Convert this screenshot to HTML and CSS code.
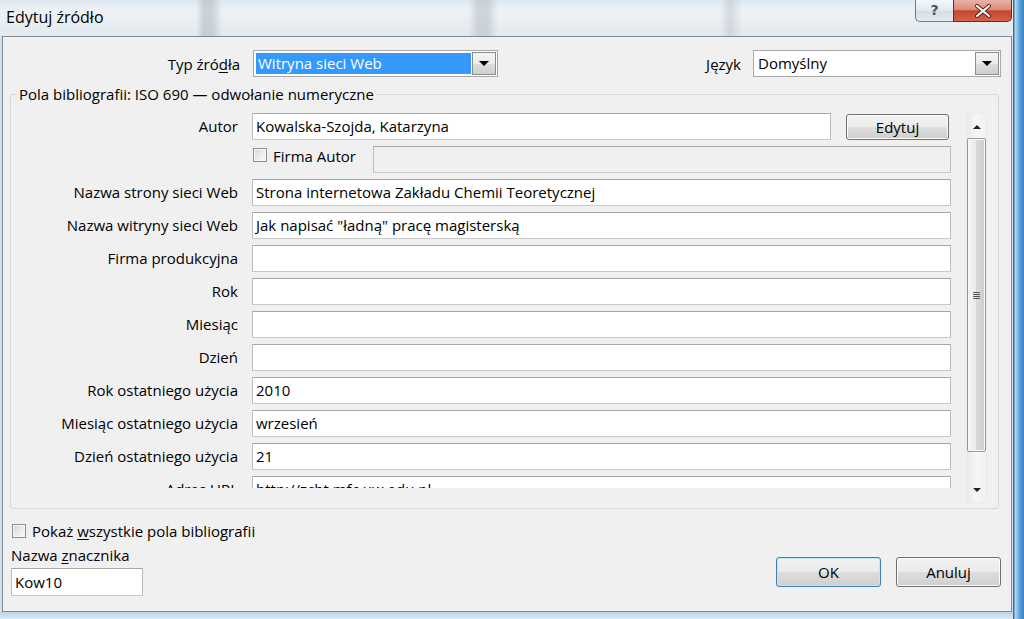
FILE: index.html
```html
<!DOCTYPE html>
<html lang="pl">
<head>
<meta charset="utf-8">
<title>Edytuj źródło</title>
<link rel="stylesheet" href="styles.css">
</head>
<body>
<div class="screen">
  <div class="main-col">
    <div class="titlebar">
      <span class="title">Edytuj źródło</span>
      <div class="caption">
        <span class="cap-help">?</span>
        <span class="cap-close">
          <svg width="18" height="14" viewBox="0 0 18 14"><path d="M3 2 L15 12 M15 2 L3 12" stroke="#5a1a10" stroke-width="4" stroke-linecap="round"/><path d="M3 2 L15 12 M15 2 L3 12" stroke="#ffffff" stroke-width="2.2" stroke-linecap="round"/></svg>
        </span>
      </div>
    </div>
    <div class="dialog">
      <div class="toprow">
        <span class="top-lbl1">Typ źró<u>d</u>ła</span>
        <div class="combo combo1">
          <span class="val sel">Witryna sieci Web</span>
          <span class="drop"><span class="tri"></span></span>
        </div>
        <span class="spacer"></span>
        <span class="top-lbl2"><u>J</u>ęzyk</span>
        <div class="combo combo2">
          <span class="val">Domyślny</span>
          <span class="drop"><span class="tri"></span></span>
        </div>
      </div>
      <fieldset class="group">
        <legend>Pola bibliografii: ISO 690 — odwołanie numeryczne</legend>
        <div class="scrollwrap">
          <div class="viewport">
            <div class="rows">
              <span class="lbl">Autor</span>
              <div class="cell-flex">
                <span class="field field-autor">Kowalska-Szojda, Katarzyna</span>
                <button class="btn btn-edit">Edytuj</button>
              </div>
              <span class="lbl"></span>
              <div class="cell-flex cell-firma">
                <span class="chk chk-firma"></span>
                <span class="chk-text">Firma Autor</span>
                <span class="field field-disabled"></span>
              </div>
              <span class="lbl">Nazwa strony sieci Web</span>
              <span class="field">Strona internetowa Zakładu Chemii Teoretycznej</span>
              <span class="lbl">Nazwa witryny sieci Web</span>
              <span class="field">Jak napisać "ładną" pracę magisterską</span>
              <span class="lbl">Firma produkcyjna</span>
              <span class="field"></span>
              <span class="lbl">Rok</span>
              <span class="field"></span>
              <span class="lbl">Miesiąc</span>
              <span class="field"></span>
              <span class="lbl">Dzień</span>
              <span class="field"></span>
              <span class="lbl">Rok ostatniego użycia</span>
              <span class="field">2010</span>
              <span class="lbl">Miesiąc ostatniego użycia</span>
              <span class="field">wrzesień</span>
              <span class="lbl">Dzień ostatniego użycia</span>
              <span class="field">21</span>
              <span class="lbl">Adres URL</span>
              <span class="field">http://zcht.mfc.uw.edu.pl</span>
            </div>
          </div>
          <div class="scrollbar">
            <span class="sb-btn"><span class="tri-up"></span></span>
            <span class="sb-thumb"><span class="grip"></span></span>
            <span class="sb-fill"></span>
            <span class="sb-btn"><span class="tri-down"></span></span>
          </div>
        </div>
      </fieldset>
      <div class="bottom">
        <div class="bottom-left">
          <div class="chk-row">
            <span class="chk"></span>
            <span class="chk-text">Pokaż <u>w</u>szystkie pola bibliografii</span>
          </div>
          <div class="tag-lbl">Nazwa <u>z</u>nacznika</div>
          <span class="field field-tag">Kow10</span>
        </div>
        <div class="bottom-right">
          <button class="btn btn-main btn-ok">OK</button>
          <button class="btn btn-main">Anuluj</button>
        </div>
      </div>
    </div>
    <div class="bottom-strip"></div>
  </div>
  <div class="frame"></div>
</div>
</body>
</html>
```

FILE: styles.css
```css
* { box-sizing: border-box; }
html, body { margin: 0; padding: 0; }
body {
  font-family: "Open Sans", "Noto Sans", sans-serif;
  font-size: 15px;
  color: #000;
  background: #cfe0f0;
}
u { text-decoration: underline; text-underline-offset: 2px; }

.screen {
  width: 1024px;
  height: 619px;
  display: flex;
  overflow: hidden;
}
.main-col {
  width: 1013px;
  display: flex;
  flex-direction: column;
}
.frame {
  width: 11px;
  background: linear-gradient(90deg, #3a6f9e 0, #3a6f9e 1px, #b9dcf5 2px, #8cc2ea 4px, #4f95d2 8px, #3b84c6 11px);
}

/* title bar */
.titlebar {
  height: 36px;
  display: flex;
  justify-content: space-between;
  align-items: flex-start;
  padding-left: 6px;
  background:
    linear-gradient(90deg, transparent 196px, rgba(140,150,160,.35) 204px, rgba(140,150,160,.35) 212px, transparent 222px),
    linear-gradient(90deg, transparent 468px, rgba(140,150,160,.3) 478px, rgba(140,150,160,.3) 488px, transparent 498px),
    linear-gradient(90deg, transparent 720px, rgba(140,150,160,.25) 730px, transparent 742px),
    linear-gradient(180deg, #dfe8f0 0, #eef2f5 30%, #e3e9ee 100%);
}
.title {
  font-size: 16px;
  line-height: 34px;
}
.caption {
  display: flex;
  margin-right: 1px;
}
.cap-help {
  width: 38px;
  height: 22px;
  border: 1px solid #6b7c92;
  border-top: none;
  border-right: none;
  border-radius: 0 0 0 5px;
  background: linear-gradient(180deg, #f5f8fb 0, #e2e9f0 50%, #d3dde8 51%, #e4ebf2 100%);
  color: #44556a;
  font-family: "DejaVu Sans", sans-serif;
  font-size: 14px;
  font-weight: bold;
  text-align: center;
  line-height: 20px;
}
.cap-close {
  width: 59px;
  height: 22px;
  border: 1px solid #6e2a1e;
  border-top: none;
  border-radius: 0 0 5px 0;
  background: linear-gradient(180deg, #eab3a5 0, #dc8c78 45%, #c7452e 52%, #d2624a 100%);
  display: flex;
  align-items: center;
  justify-content: center;
}

/* dialog */
.dialog {
  margin-left: 2px;
  width: 1010px;
  height: 576px;
  border: 1px solid #858a92;
  background: #f0f0f0;
  display: flex;
  flex-direction: column;
}
.toprow {
  display: flex;
  align-items: center;
  margin-top: 13px;
  height: 27px;
}
.top-lbl1 {
  width: 237px;
  margin-right: 13px;
  text-align: right;
}
.spacer { flex: 1; }
.top-lbl2 { margin-right: 12px; }
.combo {
  height: 27px;
  border: 1px solid #a5a9ae;
  background: #fff;
  display: flex;
  align-items: center;
  padding: 1px;
}
.combo1 { width: 245px; }
.combo2 { width: 248px; margin-right: 10px; }
.combo .val {
  flex: 1;
  height: 21px;
  line-height: 21px;
  margin: 0 1px 0 1px;
  padding-left: 2px;
  white-space: nowrap;
}
.combo .val.sel {
  background: #3399ff;
  color: #fff;
}
.drop {
  width: 24px;
  height: 23px;
  border: 1px solid #8c8c8c;
  background: linear-gradient(180deg, #f4f4f4 0, #ebebeb 50%, #dddddd 51%, #cfcfcf 100%);
  display: flex;
  align-items: center;
  justify-content: center;
}
.tri {
  width: 0;
  height: 0;
  border-left: 5px solid transparent;
  border-right: 5px solid transparent;
  border-top: 5px solid #000;
}

/* group box */
.group {
  margin: 9px 0 0 7px;
  width: 989px;
  border: 1px solid #d3d9de;
  border-radius: 3px;
  padding: 10px 0 5px 0;
  min-width: 0;
}
.group legend {
  margin-left: 6px;
  padding: 0 2px;
  line-height: 17px;
}
.scrollwrap {
  display: flex;
  align-items: flex-start;
}
.viewport {
  height: 375px;
  overflow: hidden;
  width: 940px;
}
.rows {
  display: grid;
  grid-template-columns: 227px 699px;
  grid-auto-rows: 27px;
  column-gap: 14px;
  row-gap: 6px;
}
.lbl {
  text-align: right;
  line-height: 27px;
  white-space: nowrap;
}
.field {
  display: block;
  height: 27px;
  border: 1px solid #ababab;
  border-color: #a6a6a6 #bdbdbd #c8c8c8 #bdbdbd;
  background: #fff;
  padding-left: 3px;
  line-height: 25px;
  white-space: nowrap;
  overflow: hidden;
}
.cell-flex {
  display: flex;
  align-items: center;
}
.cell-firma { align-items: flex-start; }
.cell-firma .chk { margin-top: 2px; }
.cell-firma .chk-text { line-height: 20px; }
.field-autor { width: 579px; margin-right: 15px; }
.field-disabled {
  width: 578px;
  margin-left: auto;
  background: #f0f0f0;
}
.chk {
  display: inline-block;
  width: 14px;
  height: 14px;
  border: 1px solid #8e8f8f;
  background: linear-gradient(135deg, #d6d6d6 0, #eeeeee 60%, #fbfbfb 100%);
  box-shadow: inset 0 0 0 1px #f6f6f6;
  flex: none;
}
.chk-firma { margin-left: 1px; }
.chk-text { margin-left: 6px; white-space: nowrap; }

.btn {
  font: inherit;
  color: #000;
  border: 1px solid #707070;
  border-radius: 3px;
  background: linear-gradient(180deg, #f2f2f2 0, #ebebeb 50%, #dddddd 51%, #cfcfcf 100%);
  box-shadow: inset 0 0 0 1px #fbfbfb;
  padding: 0;
}
.btn-edit { width: 103px; height: 26px; }

/* scrollbar */
.scrollbar {
  margin-left: 15px;
  width: 21px;
  height: 390px;
  border: 1px solid #ebebeb;
  background: linear-gradient(90deg, #eaeaea 0, #f6f6f6 50%, #f2f2f2 100%);
  display: flex;
  flex-direction: column;
  align-items: center;
}
.sb-btn {
  height: 23px;
  width: 100%;
  display: flex;
  align-items: center;
  justify-content: center;
}
.tri-up, .tri-down {
  width: 0;
  height: 0;
  border-left: 4px solid transparent;
  border-right: 4px solid transparent;
}
.tri-up { border-bottom: 4px solid #222; margin-top: 2px; }
.tri-down { border-top: 4px solid #222; margin-bottom: 2px; }
.sb-thumb {
  margin-top: 1px;
  width: 19px;
  height: 314px;
  border: 1px solid #979797;
  border-radius: 2px;
  background: linear-gradient(90deg, #f5f5f5 0, #eaeaea 45%, #d9d9d9 50%, #cdcdcd 100%);
  box-shadow: inset 0 0 0 1px #f8f8f8;
  display: flex;
  align-items: center;
  justify-content: center;
}
.grip {
  width: 7px;
  height: 7px;
  background: repeating-linear-gradient(180deg, #555 0, #555 1px, transparent 1px, transparent 2px);
  border-radius: 1px;
}
.sb-fill { flex: 1; }

/* bottom */
.bottom {
  flex: 1;
  display: flex;
  justify-content: space-between;
  align-items: flex-end;
  padding: 0 10px 15px 8px;
}
.bottom-left {
  display: flex;
  flex-direction: column;
}
.chk-row {
  display: flex;
  align-items: center;
  height: 15px;
  margin-left: 1px;
}
.tag-lbl {
  margin-top: 9px;
  line-height: 17px;
}
.field-tag {
  margin-top: 4px;
  width: 132px;
  height: 28px;
  line-height: 26px;
}
.bottom-right {
  display: flex;
  gap: 15px;
  margin-bottom: 9px;
}
.btn-main { width: 105px; height: 30px; }
.btn-ok {
  border-color: #3c7fb1;
  box-shadow: inset 0 0 0 1px #bfe7f7;
}

.bottom-strip {
  flex: 1;
  background: linear-gradient(180deg, #b9d2e8 0, #dceaf6 100%);
}
```
